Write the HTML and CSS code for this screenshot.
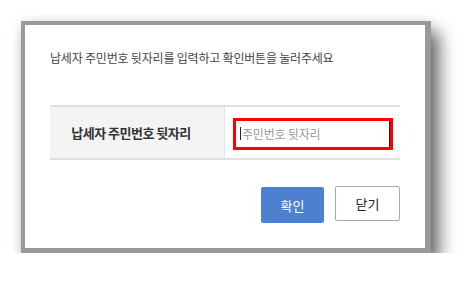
FILE: index.html
```html
<!DOCTYPE html>
<html>

<head>
    <meta charset="utf-8">
    <link rel="stylesheet" href="styles.css">
</head>

<body>
    <div class="popup">
        <p class="popup_msg">납세자 주민번호 뒷자리를 입력하고 확인버튼을 눌러주세요</p>

        <div class="popup_table">
            <div class="popup_th">납세자 주민번호 뒷자리</div>
            <div class="popup_td">
                <label class="input_mark">
                    <span class="caret"></span>
                    <input type="password" class="input_ssn" placeholder="주민번호 뒷자리">
                </label>
            </div>
        </div>

        <div class="popup_btns">
            <button class="btn btn_ok">확인</button>
            <button class="btn btn_close">닫기</button>
        </div>
    </div>
</body>

</html>
```

FILE: styles.css
```css
body {
    margin: 0;
    background: #fff;
    font-family: "Noto Sans CJK KR", "Noto Sans", sans-serif;
}

.popup {
    margin: 21px 0 0 21px;
    width: 350px;
    padding: 25px;
    background: #fff;
    border-style: solid;
    border-color: #999;
    border-width: 4px 6px 5px 4px;
    box-shadow: 8px 11px 16px rgba(0, 0, 0, .6), 0 0 10px rgba(0, 0, 0, .08);
}

.popup_msg {
    margin: 0;
    height: 16px;
    line-height: 16px;
    font-size: 12px;
    letter-spacing: -0.2px;
    color: #444;
}

.popup_table {
    display: flex;
    margin-top: 39px;
    height: 51px;
    border-top: 2px solid #e0e0e0;
    border-bottom: 2px solid #e0e0e0;
}

.popup_th {
    width: 175px;
    display: flex;
    align-items: center;
    justify-content: center;
    background: #f4f4f4;
    border-right: 1px solid #e4e4e4;
    font-size: 13px;
    font-weight: bold;
    letter-spacing: -0.5px;
    color: #333;
    padding-right: 12px;
    box-sizing: border-box;
}

.popup_td {
    flex: 1;
    display: flex;
    align-items: center;
    padding-left: 8px;
}

.input_mark {
    display: flex;
    align-items: center;
    width: 160px;
    height: 32px;
    border: 3px solid #f00;
    box-sizing: border-box;
    margin-top: 2px;
}

.caret {
    width: 1px;
    height: 13px;
    margin-left: 4px;
    background: #222;
}

.input_ssn {
    flex: 1;
    min-width: 0;
    height: 100%;
    box-sizing: border-box;
    border: 0;
    border-right: 1px solid #222;
    padding: 0 0 0 1px;
    font-family: inherit;
    font-size: 12px;
    letter-spacing: -0.2px;
    outline: none;
}

.input_ssn::placeholder {
    color: #999;
}

.popup_btns {
    display: flex;
    justify-content: flex-end;
    align-items: flex-start;
    gap: 11px;
    margin-top: 26px;
}

.btn {
    font-family: inherit;
    font-size: 13px;
    cursor: pointer;
}

.btn_ok {
    width: 63px;
    height: 36px;
    border: 0;
    border-radius: 2px;
    background: #4d80d0;
    color: #fff;
    margin-top: 1px;
}

.btn_close {
    width: 65px;
    height: 35px;
    border: 1px solid #aaa;
    border-radius: 2px;
    background: #fff;
    color: #222;
}
```
